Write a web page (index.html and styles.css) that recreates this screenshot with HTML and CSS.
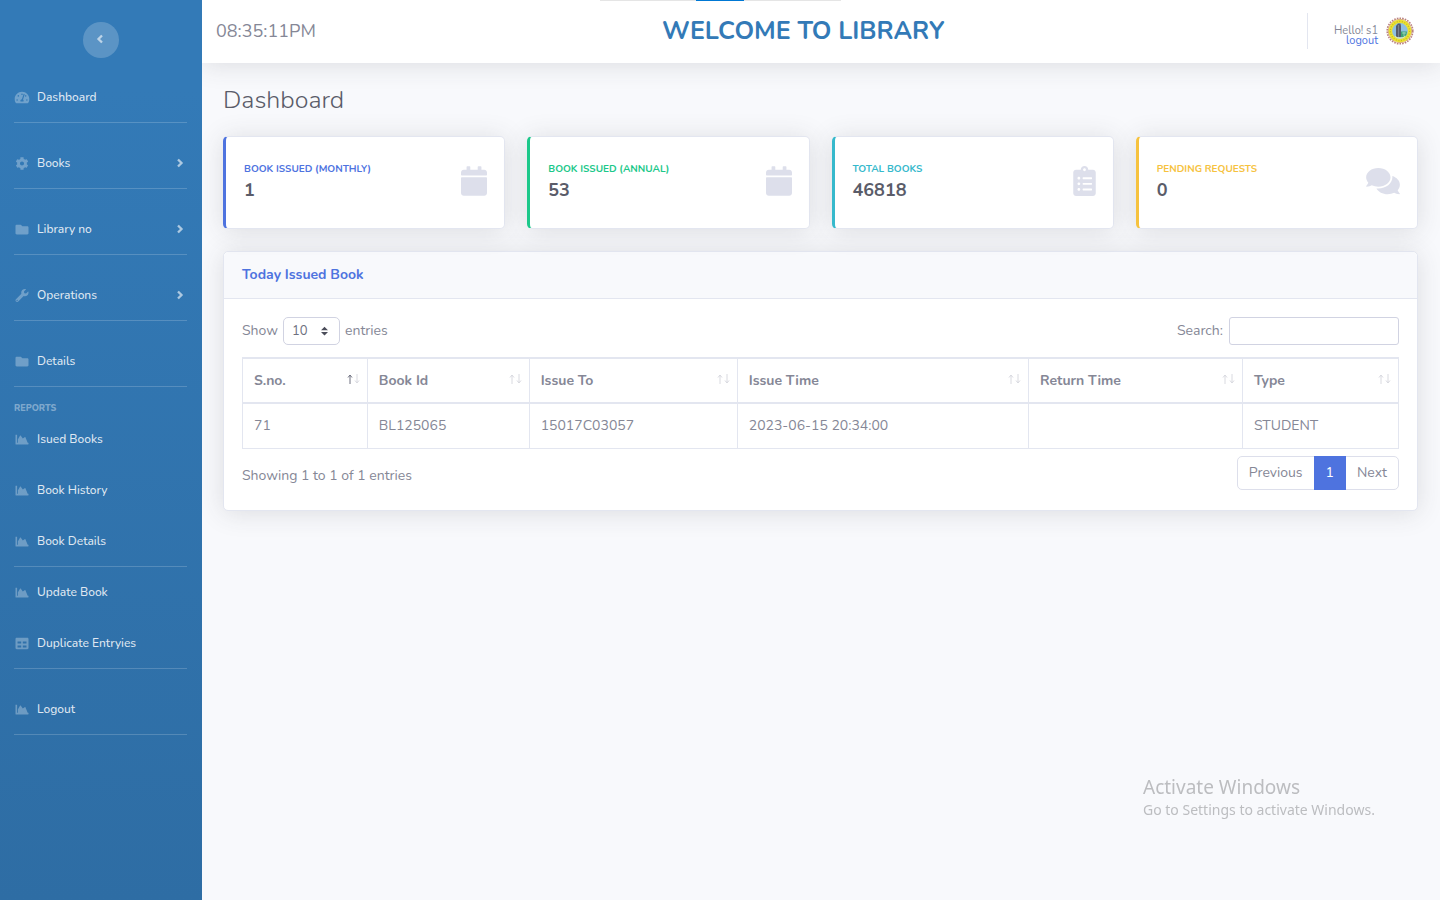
FILE: index.html
```html
<!DOCTYPE html>
<html lang="en">
<head>
<meta charset="utf-8">
<meta name="viewport" content="width=device-width, initial-scale=1">
<title>Library Dashboard</title>
<link rel="stylesheet" href="styles.css">
</head>
<body>
<svg class="sprite" aria-hidden="true">
  <symbol id="i-dash" viewBox="0 0 576 512"><path d="M288 32C128.94 32 0 160.94 0 320c0 52.8 14.25 102.26 39.06 144.8 5.61 9.62 16.3 15.2 27.44 15.2h443c11.14 0 21.83-5.58 27.44-15.2C561.75 422.26 576 372.8 576 320c0-159.06-128.94-288-288-288zm0 64c14.71 0 26.58 10.13 30.32 23.65-1.11 2.26-2.64 4.23-3.45 6.67l-9.22 27.67c-5.13 3.49-10.97 6.01-17.64 6.01-17.67 0-32-14.33-32-32S270.33 96 288 96zM96 384c-17.67 0-32-14.33-32-32s14.33-32 32-32 32 14.33 32 32-14.33 32-32 32zm48-160c-17.67 0-32-14.33-32-32s14.33-32 32-32 32 14.33 32 32-14.33 32-32 32zm246.77-72.41l-61.33 184C343.13 347.33 352 364.54 352 384c0 11.72-3.38 22.55-8.88 32H232.88c-5.5-9.45-8.88-20.28-8.88-32 0-33.94 26.5-61.43 59.9-63.59l61.34-184.01c4.17-12.56 17.73-19.45 30.36-15.17 12.57 4.19 19.35 17.79 15.17 30.36zm14.66 57.2l15.52-46.55c3.47-1.29 7.13-2.23 11.05-2.23 17.67 0 32 14.33 32 32s-14.33 32-32 32c-11.38-.01-20.89-6.28-26.57-15.22zM480 384c-17.67 0-32-14.33-32-32s14.33-32 32-32 32 14.33 32 32-14.33 32-32 32z"/></symbol>
  <symbol id="i-cog" viewBox="0 0 512 512"><path d="M487.4 315.7l-42.6-24.6c4.3-23.2 4.3-47 0-70.2l42.6-24.6c4.9-2.8 7.1-8.6 5.5-14-11.1-35.6-30-67.8-54.7-94.6-3.8-4.1-10-5.1-14.8-2.3L380.8 110c-17.9-15.4-38.5-27.3-60.8-35.1V25.8c0-5.6-3.9-10.5-9.4-11.7-36.7-8.2-74.3-7.8-109.2 0-5.5 1.2-9.4 6.1-9.4 11.7V75c-22.2 7.9-42.8 19.8-60.8 35.1L88.7 85.5c-4.9-2.8-11-1.9-14.8 2.3-24.7 26.7-43.6 58.9-54.7 94.6-1.7 5.4.6 11.2 5.5 14L67.3 221c-4.3 23.2-4.3 47 0 70.2l-42.6 24.6c-4.9 2.8-7.1 8.6-5.5 14 11.1 35.6 30 67.8 54.7 94.6 3.8 4.1 10 5.1 14.8 2.3l42.6-24.6c17.9 15.4 38.5 27.3 60.8 35.1v49.2c0 5.6 3.9 10.5 9.4 11.7 36.7 8.2 74.3 7.8 109.2 0 5.5-1.2 9.4-6.1 9.4-11.7v-49.2c22.2-7.9 42.8-19.8 60.8-35.1l42.6 24.6c4.9 2.8 11 1.9 14.8-2.3 24.7-26.7 43.6-58.9 54.7-94.6 1.5-5.5-.7-11.3-5.6-14.1zM256 336c-44.1 0-80-35.9-80-80s35.9-80 80-80 80 35.9 80 80-35.9 80-80 80z"/></symbol>
  <symbol id="i-folder" viewBox="0 0 512 512"><path d="M464 128H272l-64-64H48C21.5 64 0 85.5 0 112v288c0 26.5 21.5 48 48 48h416c26.5 0 48-21.5 48-48V176c0-26.5-21.5-48-48-48z"/></symbol>
  <symbol id="i-wrench" viewBox="0 0 512 512"><path d="M507.73 109.1c-2.24-9.03-13.54-12.09-20.12-5.51l-74.36 74.36-67.88-11.31-11.31-67.88 74.36-74.36c6.62-6.62 3.43-17.9-5.66-20.16-47.38-11.74-99.55.91-136.58 37.93-39.64 39.64-50.55 97.1-34.05 147.2L18.74 402.76c-24.99 24.99-24.99 65.51 0 90.5 24.99 24.99 65.51 24.99 90.5 0l213.21-213.21c50.12 16.71 107.47 5.68 147.37-34.22 37.07-37.07 49.7-89.32 37.91-136.73zM64 472c-13.25 0-24-10.75-24-24 0-13.26 10.75-24 24-24s24 10.74 24 24c0 13.25-10.75 24-24 24z"/></symbol>
  <symbol id="i-chart" viewBox="0 0 512 512"><path d="M500 384c6.6 0 12 5.4 12 12v40c0 6.6-5.4 12-12 12H12c-6.6 0-12-5.4-12-12V76c0-6.6 5.4-12 12-12h40c6.6 0 12 5.4 12 12v308h436zM372.7 159.5L288 216l-85.3-113.7c-5.1-6.8-15.5-6.3-19.9 1L96 248v136h384l-89.9-219.8c-3.2-6.5-11.4-8.7-17.4-4.7z"/></symbol>
  <symbol id="i-table" viewBox="0 0 512 512"><path d="M464 32H48C21.49 32 0 53.49 0 80v352c0 26.51 21.49 48 48 48h416c26.51 0 48-21.49 48-48V80c0-26.51-21.49-48-48-48zM224 416H80v-80h144v80zm0-160H80v-80h144v80zm208 160H288v-80h144v80zm0-160H288v-80h144v80z"/></symbol>
  <symbol id="i-calendar" viewBox="0 0 448 512"><path d="M12 192h424c6.6 0 12 5.4 12 12v260c0 26.5-21.5 48-48 48H48c-26.5 0-48-21.5-48-48V204c0-6.6 5.4-12 12-12zm436-44v-36c0-26.5-21.5-48-48-48h-48V12c0-6.6-5.4-12-12-12h-40c-6.6 0-12 5.4-12 12v52H160V12c0-6.6-5.4-12-12-12h-40c-6.6 0-12 5.4-12 12v52H48C21.5 64 0 85.5 0 112v36c0 6.6 5.4 12 12 12h424c6.6 0 12-5.4 12-12z"/></symbol>
  <symbol id="i-clipboard" viewBox="0 0 384 512"><path d="M336 64h-80c0-35.3-28.7-64-64-64s-64 28.7-64 64H48C21.5 64 0 85.5 0 112v352c0 26.5 21.5 48 48 48h288c26.5 0 48-21.5 48-48V112c0-26.5-21.5-48-48-48zM96 424c-13.3 0-24-10.7-24-24s10.7-24 24-24 24 10.7 24 24-10.7 24-24 24zm0-96c-13.3 0-24-10.7-24-24s10.7-24 24-24 24 10.7 24 24-10.7 24-24 24zm0-96c-13.3 0-24-10.7-24-24s10.7-24 24-24 24 10.7 24 24-10.7 24-24 24zm96-192c13.3 0 24 10.7 24 24s-10.7 24-24 24-24-10.7-24-24 10.7-24 24-24zm128 368c0 4.4-3.6 8-8 8H168c-4.4 0-8-3.6-8-8v-16c0-4.4 3.6-8 8-8h144c4.4 0 8 3.6 8 8v16zm0-96c0 4.4-3.6 8-8 8H168c-4.4 0-8-3.6-8-8v-16c0-4.4 3.6-8 8-8h144c4.4 0 8 3.6 8 8v16zm0-96c0 4.4-3.6 8-8 8H168c-4.4 0-8-3.6-8-8v-16c0-4.4 3.6-8 8-8h144c4.4 0 8 3.6 8 8v16z"/></symbol>
  <symbol id="i-comments" viewBox="0 0 576 512"><path d="M416 192c0-88.4-93.1-160-208-160S0 103.6 0 192c0 34.3 14.1 65.9 38 92-13.4 30.2-35.5 54.2-35.8 54.5-2.2 2.3-2.8 5.7-1.5 8.7S4.800 352 8 352c36.6 0 66.9-12.3 88.7-25 32.2 15.7 70.3 25 111.3 25 114.9 0 208-71.6 208-160zm122 220c23.9-26 38-57.7 38-92 0-66.9-53.5-124.2-129.3-148.1.9 6.6 1.3 13.3 1.3 20.1 0 105.9-107.7 192-240 192-10.8 0-21.3-.8-31.7-1.900C207.800 439.600 281.800 480 368 480c41 0 79.100-9.200 111.300-25 21.800 12.700 52.100 25 88.700 25 3.200 0 6.100-1.900 7.300-4.800 1.300-2.900.7-6.300-1.500-8.700-.3-.3-22.400-24.200-35.800-54.500z"/></symbol>
  <symbol id="i-right" viewBox="0 0 8 10"><path d="M2 1.5 5.5 5 2 8.5" fill="none" stroke="currentColor" stroke-width="2.3"/></symbol>
  <symbol id="i-left" viewBox="0 0 8 10"><path d="M6 1.5 2.5 5 6 8.5" fill="none" stroke="currentColor" stroke-width="2.3"/></symbol>
  <symbol id="i-up" viewBox="0 0 6 10"><path d="M3 10V1M1 3.5 3 1l2 2.500" fill="none" stroke="currentColor"/></symbol>
  <symbol id="i-down" viewBox="0 0 6 10"><path d="M3 0v9M1 6.5 3 9l2-2.500" fill="none" stroke="currentColor"/></symbol>
</svg>

<div class="layout">
  <aside class="sidebar">
    <button class="toggle" type="button" aria-label="Collapse sidebar"><svg class="angle"><use href="#i-left"/></svg></button>
    <nav class="nav">
      <a class="item" href="#"><svg class="ico"><use href="#i-dash"/></svg>Dashboard</a>
      <hr class="rule spaced">
      <a class="item" href="#"><svg class="ico"><use href="#i-cog"/></svg>Books<svg class="angle more"><use href="#i-right"/></svg></a>
      <hr class="rule spaced">
      <a class="item" href="#"><svg class="ico"><use href="#i-folder"/></svg>Library no<svg class="angle more"><use href="#i-right"/></svg></a>
      <hr class="rule spaced">
      <a class="item" href="#"><svg class="ico"><use href="#i-wrench"/></svg>Operations<svg class="angle more"><use href="#i-right"/></svg></a>
      <hr class="rule spaced">
      <a class="item" href="#"><svg class="ico"><use href="#i-folder"/></svg>Details</a>
      <hr class="rule spaced">
      <h2 class="group-title">REPORTS</h2>
      <div class="group">
        <a class="item" href="#"><svg class="ico"><use href="#i-chart"/></svg>Isued Books</a>
        <a class="item" href="#"><svg class="ico"><use href="#i-chart"/></svg>Book History</a>
        <a class="item" href="#"><svg class="ico"><use href="#i-chart"/></svg>Book Details</a>
      </div>
      <hr class="rule">
      <div class="group">
        <a class="item" href="#"><svg class="ico"><use href="#i-chart"/></svg>Update Book</a>
        <a class="item" href="#"><svg class="ico"><use href="#i-table"/></svg>Duplicate Entryies</a>
      </div>
      <hr class="rule spaced">
      <a class="item" href="#"><svg class="ico"><use href="#i-chart"/></svg>Logout</a>
      <hr class="rule">
    </nav>
  </aside>

  <div class="page">
    <header class="topbar">
      <div class="loader"><span class="loader-bar"></span></div>
      <time class="clock">08:35:11PM</time>
      <div class="brand">WELCOME TO LIBRARY</div>
      <div class="user">
        <div class="user-text"><span>Hello! s1</span><a href="#">logout</a></div>
        <svg class="avatar" viewBox="0 0 28 28" role="img" aria-label="Library emblem">
          <circle cx="14" cy="14" r="12.8" fill="#fff" stroke="#b98080" stroke-width="1.6" stroke-dasharray="1.6 1.1"/>
          <circle cx="14" cy="14" r="11.7" fill="none" stroke="#c9905a" stroke-width=".8"/>
          <circle cx="14" cy="14" r="9.6" fill="#8fbfe2" stroke="#ece22e" stroke-width="3.4"/>
          <circle cx="14" cy="14" r="9.6" fill="none" stroke="#c2b52a" stroke-width="1.2" stroke-dasharray="1 1.6"/>
          <path d="M10 19.500V9l2-2.500h2.500L15 9v11h-4z" fill="#565c6b"/>
          <path d="M12.500 8v12" stroke="#848a99" stroke-width=".8"/>
          <path d="M15 14.500h6l-.6 3.500-2.400 2h-3z" fill="#3fa276"/>
          <path d="M16 16h4M18 15v4" stroke="#b9e0cc" stroke-width=".7"/>
          <path d="M9 19.500q5 3.500 10 0" fill="none" stroke="#f4f2ac" stroke-width="1"/>
        </svg>
      </div>
    </header>

    <main class="content">
      <h1 class="title">Dashboard</h1>
      <section class="stats">
        <article class="stat blue"><div><h3 class="stat-name">BOOK ISSUED (MONTHLY)</h3><p class="stat-value">1</p></div><svg class="stat-ico cal"><use href="#i-calendar"/></svg></article>
        <article class="stat green"><div><h3 class="stat-name">BOOK ISSUED (ANNUAL)</h3><p class="stat-value">53</p></div><svg class="stat-ico cal"><use href="#i-calendar"/></svg></article>
        <article class="stat teal"><div><h3 class="stat-name">TOTAL BOOKS</h3><p class="stat-value">46818</p></div><svg class="stat-ico clip"><use href="#i-clipboard"/></svg></article>
        <article class="stat amber"><div><h3 class="stat-name">PENDING REQUESTS</h3><p class="stat-value">0</p></div><svg class="stat-ico chat"><use href="#i-comments"/></svg></article>
      </section>

      <section class="card">
        <h2 class="card-head">Today Issued Book</h2>
        <div class="card-body">
          <div class="tools">
            <div class="length">
              <label for="len">Show</label>
              <span class="select-wrap">
                <select id="len" class="select"><option>10</option><option>25</option><option>50</option></select>
                <svg class="caret" viewBox="0 0 8 10"><path d="M0 4 4 0l4 4zM0 6h8l-4 4z"/></svg>
              </span>
              <label for="len">entries</label>
            </div>
            <div class="search"><label for="q">Search:</label><input id="q" class="input" type="search"></div>
          </div>
          <table class="table">
            <colgroup><col class="c-no"><col class="c-id"><col class="c-to"><col class="c-time"><col class="c-ret"><col class="c-type"></colgroup>
            <thead><tr>
              <th><div class="th">S.no.<span class="sort asc"><svg><use href="#i-up"/></svg><svg><use href="#i-down"/></svg></span></div></th>
              <th><div class="th">Book Id<span class="sort"><svg><use href="#i-up"/></svg><svg><use href="#i-down"/></svg></span></div></th>
              <th><div class="th">Issue To<span class="sort"><svg><use href="#i-up"/></svg><svg><use href="#i-down"/></svg></span></div></th>
              <th><div class="th">Issue Time<span class="sort"><svg><use href="#i-up"/></svg><svg><use href="#i-down"/></svg></span></div></th>
              <th><div class="th">Return Time<span class="sort"><svg><use href="#i-up"/></svg><svg><use href="#i-down"/></svg></span></div></th>
              <th><div class="th">Type<span class="sort"><svg><use href="#i-up"/></svg><svg><use href="#i-down"/></svg></span></div></th>
            </tr></thead>
            <tbody><tr><td>71</td><td>BL125065</td><td>15017C03057</td><td>2023-06-15 20:34:00</td><td></td><td>STUDENT</td></tr></tbody>
          </table>
          <div class="foot">
            <p class="info">Showing 1 to 1 of 1 entries</p>
            <nav class="pager" aria-label="Table pages"><a href="#">Previous</a><a class="current" href="#">1</a><a href="#">Next</a></nav>
          </div>
        </div>
      </section>
    </main>
  </div>
</div>

<div class="watermark"><p class="wm-title">Activate Windows</p><p class="wm-text">Go to Settings to activate Windows.</p></div>
</body>
</html>
```
FILE: styles.css
```css
* { box-sizing: border-box; }
body { margin: 0; font: 14px/22px Nunito, Lato, sans-serif; color: #858796; background: #f8f9fc; }
h1, h2, h3, p { margin: 0; }
a { color: inherit; text-decoration: none; }
svg { fill: currentColor; flex: none; }
.sprite { position: absolute; width: 0; height: 0; }

.layout { display: flex; min-height: 100vh; }

.sidebar { position: relative; z-index: 2; flex: none; width: 202px; padding-top: 22px; display: flex; flex-direction: column; align-items: center; background: linear-gradient(180deg, #337ab7 10%, #2e6da4 100%); }
.toggle { width: 36px; height: 36px; padding: 0 2px 2px 0; border: 0; border-radius: 50%; background: rgba(255, 255, 255, .2); color: rgba(255, 255, 255, .6); display: flex; align-items: center; justify-content: center; }
.angle { width: 8px; height: 10px; }
.nav { width: 100%; padding: 14px 15px 0 14px; }
.item { display: flex; align-items: center; gap: 7px; height: 50px; padding-right: 3px; font-size: 12px; font-weight: 500; color: rgba(255, 255, 255, .85); }
.ico { width: 16px; height: 13px; color: rgba(255, 255, 255, .3); }
.more { margin-left: auto; color: rgba(255, 255, 255, .6); }
.rule { height: 1px; margin: 0; border: 0; background: rgba(255, 255, 255, .18); }
.spaced { margin-bottom: 15px; }
.group-title { font-size: 9px; line-height: 12px; font-weight: 800; color: rgba(255, 255, 255, .4); }
.group { display: flex; flex-direction: column; gap: 1px; }

.page { flex: 1; min-width: 0; }
.topbar { position: relative; z-index: 1; display: grid; grid-template-columns: 19fr auto 20fr; align-items: center; height: 63px; padding: 0 26px 1px 14px; background: #fff; box-shadow: 0 2px 26px rgba(58, 59, 69, .15); }
.loader { position: absolute; top: 0; left: 398px; width: 241px; height: 1px; background: #e5e5e5; }
.loader-bar { display: block; width: 48px; height: 1px; margin-left: 96px; background: #0078d4; }
.clock { font-size: 18px; }
.brand { font-size: 25px; line-height: 30px; font-weight: 700; color: #337ab7; }
.user { justify-self: end; display: flex; align-items: center; gap: 8px; height: 36px; padding-left: 26px; border-left: 1px solid #e3e6f0; }
.user-text { display: flex; flex-direction: column; align-items: flex-end; padding-top: 9px; font-size: 11px; line-height: 10px; }
.user-text a { color: #4e73df; }
.avatar { width: 28px; height: 28px; }

.content { padding: 21px 22px 22px 21px; }
.title { font-size: 25px; line-height: 33px; font-weight: 300; color: #5a5c69; margin-bottom: 19px; }

.stats { display: grid; grid-template-columns: repeat(4, 1fr); gap: 22px; margin-bottom: 22px; }
.stat, .card { background: #fff; border: 1px solid #e3e6f0; border-radius: 5px; box-shadow: 0 2px 26px rgba(58, 59, 69, .15); }
.stat { display: flex; align-items: center; justify-content: space-between; height: 93px; padding: 0 17px 4px 18px; border-left-width: 3px; }
.stat-name { font-size: 10px; line-height: 16px; font-weight: 700; margin-bottom: 2px; }
.stat-value { font-size: 18px; line-height: 22px; font-weight: 700; color: #5a5c69; }
.stat-ico { color: #dddfeb; height: 30px; }
.cal { width: 26px; }
.clip { width: 23px; }
.chat { width: 34px; }
.blue { border-left-color: #4e73df; }
.blue h3 { color: #4e73df; }
.green { border-left-color: #1cc88a; }
.green h3 { color: #1cc88a; }
.teal { border-left-color: #36b9cc; }
.teal h3 { color: #36b9cc; }
.amber { border-left-color: #f6c23e; }
.amber h3 { color: #f6c23e; }

.card-head { padding: 12px 18px; font-size: 14px; line-height: 22px; font-weight: 700; color: #4e73df; background: #f8f9fc; border-bottom: 1px solid #e3e6f0; border-radius: 5px 5px 0 0; }
.card-body { padding: 18px 18px 20px; }
.tools { display: flex; align-items: center; justify-content: space-between; margin-bottom: 12px; }
.length { display: flex; align-items: center; gap: 5px; }
.search { display: flex; align-items: center; gap: 6px; }
.select-wrap { position: relative; display: flex; }
.select { appearance: none; width: 57px; height: 28px; padding: 0 8px; font: 13px Nunito, Lato, sans-serif; color: #6e707e; background: #fff; border: 1px solid #d1d3e2; border-radius: 5px; }
.caret { position: absolute; right: 12px; top: 9px; width: 7px; height: 10px; color: #4b4d5a; pointer-events: none; }
.input { appearance: none; width: 170px; height: 28px; padding: 0 8px; font: 13px Nunito, Lato, sans-serif; background: #fff; border: 1px solid #d1d3e2; border-radius: 3px; }

.table { width: 100%; table-layout: fixed; border-collapse: collapse; }
.table th, .table td { height: 45px; padding: 0 11px; text-align: left; border: 1px solid #e3e6f0; }
.table th { border-top-width: 2px; border-bottom-width: 2px; padding-right: 7px; font-weight: 700; }
.c-no { width: 10.8%; }
.c-id { width: 14%; }
.c-to { width: 18%; }
.c-time { width: 25.2%; }
.c-ret { width: 18.5%; }
.c-type { width: 13.5%; }
.th { display: flex; align-items: center; justify-content: space-between; }
.sort { display: flex; gap: 1px; padding-bottom: 3px; color: #d9dae0; }
.sort svg { width: 6px; height: 10px; }
.asc svg:first-child { color: #6f7180; }

.foot { display: flex; align-items: flex-start; justify-content: space-between; margin-top: 7px; }
.info { padding-top: 9px; }
.pager { display: flex; border: 1px solid #dddfeb; border-radius: 5px; background: #fff; }
.pager a { padding: 5px 11px; }
.pager .current { margin: -1px 0; padding: 6px 12px; color: #fff; background: #4e73df; }

.watermark { position: fixed; z-index: 2; left: 1143px; top: 775px; font-family: "Noto Sans", "Open Sans", sans-serif; color: #bcbdc0; pointer-events: none; white-space: nowrap; }
.wm-title { font-size: 19px; line-height: 24px; }
.wm-text { font-size: 14px; line-height: 22px; }
```
